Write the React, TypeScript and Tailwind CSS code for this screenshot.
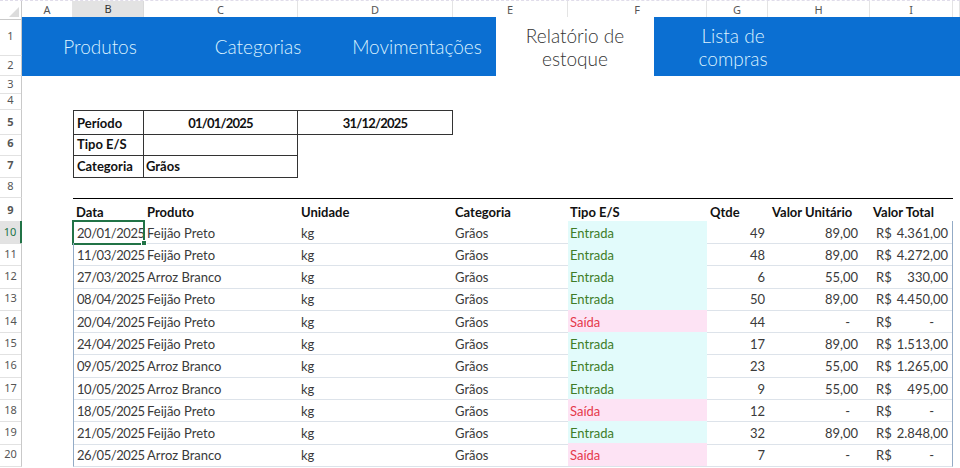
const GRID = 'grid grid-cols-[22px_51px_71px_154px_155px_115px_139px_61px_102px_83px_1fr]'

const letters = ['A', 'B', 'C', 'D', 'E', 'F', 'G', 'H', 'I', '']

type Row = {
  data: string
  produto: string
  qtde: number
  unit: string
  total: string
  saida?: boolean
}

const rows: Row[] = [
  { data: '20/01/2025', produto: 'Feijão Preto', qtde: 49, unit: '89,00', total: '4.361,00' },
  { data: '11/03/2025', produto: 'Feijão Preto', qtde: 48, unit: '89,00', total: '4.272,00' },
  { data: '27/03/2025', produto: 'Arroz Branco', qtde: 6, unit: '55,00', total: '330,00' },
  { data: '08/04/2025', produto: 'Feijão Preto', qtde: 50, unit: '89,00', total: '4.450,00' },
  { data: '20/04/2025', produto: 'Feijão Preto', qtde: 44, unit: '-', total: '-', saida: true },
  { data: '24/04/2025', produto: 'Feijão Preto', qtde: 17, unit: '89,00', total: '1.513,00' },
  { data: '09/05/2025', produto: 'Arroz Branco', qtde: 23, unit: '55,00', total: '1.265,00' },
  { data: '10/05/2025', produto: 'Arroz Branco', qtde: 9, unit: '55,00', total: '495,00' },
  { data: '18/05/2025', produto: 'Feijão Preto', qtde: 12, unit: '-', total: '-', saida: true },
  { data: '21/05/2025', produto: 'Feijão Preto', qtde: 32, unit: '89,00', total: '2.848,00' },
  { data: '26/05/2025', produto: 'Arroz Branco', qtde: 7, unit: '-', total: '-', saida: true },
]

function RowLabel({ n, active }: { n: number; active?: boolean }) {
  return (
    <div
      className={
        active
          ? 'flex items-center justify-center border-b border-[#e2e2e2] border-r-2 border-r-[#217346] bg-[#e3e3e3] text-[11px] text-[#217346]'
          : 'flex items-center justify-center border-b border-[#e2e2e2] border-r border-r-[#c9c9c9] text-[11px] text-[#555]'
      }
      style={{ fontFamily: '"Noto Sans", sans-serif' }}
    >
      {n}
    </div>
  )
}

function Tab({ label, active, w }: { label: string; active?: boolean; w: string }) {
  return (
    <div
      className={`${w} flex items-center justify-center text-center text-[19px] font-light leading-[23px] ${
        active ? 'bg-white text-[#353535]' : 'text-[#dcf2ff]'
      }`}
    >
      <span className="whitespace-pre-line">{label}</span>
    </div>
  )
}

export default function App() {
  return (
    <div
      className="w-[960px] h-[468px] overflow-hidden bg-white text-[13px] text-[#3a3a3a]"
      style={{ fontFamily: 'Lato, "DejaVu Sans", sans-serif' }}
    >
      {/* column letters */}
      <div className={`${GRID} h-[17px] border-t border-dashed border-[#e0dcea]`}>
        <div className="relative border-r border-b border-[#c9c9c9]">
          <svg className="absolute right-[2px] bottom-[2px]" width="10" height="10" viewBox="0 0 10 10">
            <polygon points="10,0 10,10 0,10" fill="#dcdcdc" />
          </svg>
        </div>
        {letters.map((l, i) => (
          <div
            key={i}
            className={
              l === 'B'
                ? 'flex items-center justify-center border-r border-[#dadada] border-b-2 border-b-[#217346] bg-[#e3e3e3] text-[11px] text-[#333]'
                : 'flex items-center justify-center border-r border-[#e4e4e4] border-b border-b-[#c9c9c9] text-[11px] text-[#555]'
            }
            style={{ fontFamily: '"Noto Sans", sans-serif' }}
          >
            {l}
          </div>
        ))}
      </div>

      {/* navigation band, rows 1-2 */}
      <div className="flex h-[59px]">
        <div className="grid w-[22px] grid-rows-[39px_20px]">
          <RowLabel n={1} />
          <RowLabel n={2} />
        </div>
        <div className="flex flex-1 bg-[#0b6fd2]">
          <Tab w="w-[156px]" label="Produtos" />
          <Tab w="w-[160px]" label="Categorias" />
          <Tab w="w-[158px]" label="Movimentações" />
          <Tab w="w-[158px]" label={'Relatório de\nestoque'} active />
          <Tab w="w-[158px]" label={'Lista de\ncompras'} />
        </div>
      </div>

      <div className={`${GRID} h-[15px]`}>
        <RowLabel n={3} />
      </div>
      <div className={`${GRID} h-[19px]`}>
        <RowLabel n={4} />
      </div>

      {/* filters */}
      <div className={`${GRID} h-[22px] font-bold text-[#111]`}>
        <RowLabel n={5} />
        <div />
        <div className="flex items-center border border-[#333] pl-[3px] pt-[3px]">Período</div>
        <div className="flex items-center justify-center border-y border-r border-[#333] pt-[3px] tracking-[-0.8px]">01/01/2025</div>
        <div className="flex items-center justify-center border-y border-r border-[#333] pt-[3px] tracking-[-0.8px]">31/12/2025</div>
      </div>
      <div className={`${GRID} h-[22px] font-bold text-[#111]`}>
        <RowLabel n={6} />
        <div />
        <div className="flex items-center border-x border-b border-[#333] pl-[3px] pt-[3px]">Tipo E/S</div>
        <div className="border-r border-b border-[#333]" />
      </div>
      <div className={`${GRID} h-[22px] font-bold text-[#111]`}>
        <RowLabel n={7} />
        <div />
        <div className="flex items-center border-x border-b border-[#333] pl-[3px] pt-[3px]">Categoria</div>
        <div className="flex items-center border-r border-b border-[#333] pl-[2px] pt-[3px]">Grãos</div>
      </div>
      <div className={`${GRID} h-[22px]`}>
        <RowLabel n={8} />
      </div>

      {/* report header */}
      <div className={`${GRID} h-[22.5px] font-bold text-[#111]`}>
        <RowLabel n={9} />
        <div />
        <div className="flex items-center border-t border-black pl-[3px] pt-[4px]">Data</div>
        <div className="flex items-center border-t border-black pl-[3px] pt-[4px]">Produto</div>
        <div className="flex items-center border-t border-black pl-[3px] pt-[4px]">Unidade</div>
        <div className="flex items-center border-t border-black pl-[2px] pt-[4px]">Categoria</div>
        <div className="flex items-center border-t border-black pl-[2px] pt-[4px]">Tipo E/S</div>
        <div className="flex items-center border-t border-black pl-[3px] pt-[4px]">Qtde</div>
        <div className="flex items-center border-t border-black pl-[4px] pt-[4px]">Valor Unitário</div>
        <div className="flex items-center border-t border-black pl-[3px] pt-[4px]">Valor Total</div>
      </div>

      {rows.map((r, i) => (
        <div key={i} className={`${GRID} h-[22.3px]`}>
          <RowLabel n={10 + i} active={i === 0} />
          <div />
          <div
            className={`relative flex items-center border-b border-l border-[#dde3ea] border-l-[#93abc6] pl-[3px] pt-[3px] tracking-[-0.45px] ${
              i === 0 ? 'outline-2 -outline-offset-1 outline-[#217346]' : ''
            }`}
          >
            {r.data}
            {i === 0 && <span className="absolute -right-[3px] -bottom-[3px] h-[6px] w-[6px] border border-white bg-[#217346]" />}
          </div>
          <div className="flex items-center border-b border-[#dde3ea] pl-[3px] pt-[3px]">{r.produto}</div>
          <div className="flex items-center border-b border-[#dde3ea] pl-[3px] pt-[3px]">kg</div>
          <div className="flex items-center border-b border-[#dde3ea] pl-[2px] pt-[3px]">Grãos</div>
          <div
            className={`flex items-center border-b border-[#dde3ea] pl-[2px] pt-[3px] ${
              r.saida ? 'bg-[#fde3f4] text-[#e5394b]' : 'bg-[#e2fbfb] text-[#3f7d28]'
            }`}
          >
            {r.saida ? 'Saída' : 'Entrada'}
          </div>
          <div className="flex items-center justify-end border-b border-[#dde3ea] pr-[3px] pt-[3px]">{r.qtde}</div>
          <div
            className={`flex items-center justify-end border-b border-[#dde3ea] pt-[3px] ${r.unit === '-' ? 'pr-[20px]' : 'pr-[12px]'}`}
          >
            {r.unit}
          </div>
          <div className="flex items-center justify-between border-b border-r border-[#dde3ea] border-r-[#93abc6] pl-[6px] pt-[3px]">
            <span>R$</span>
            <span className={r.total === '-' ? 'pr-[18px]' : 'pr-[4px]'}>{r.total}</span>
          </div>
        </div>
      ))}
    </div>
  )
}
